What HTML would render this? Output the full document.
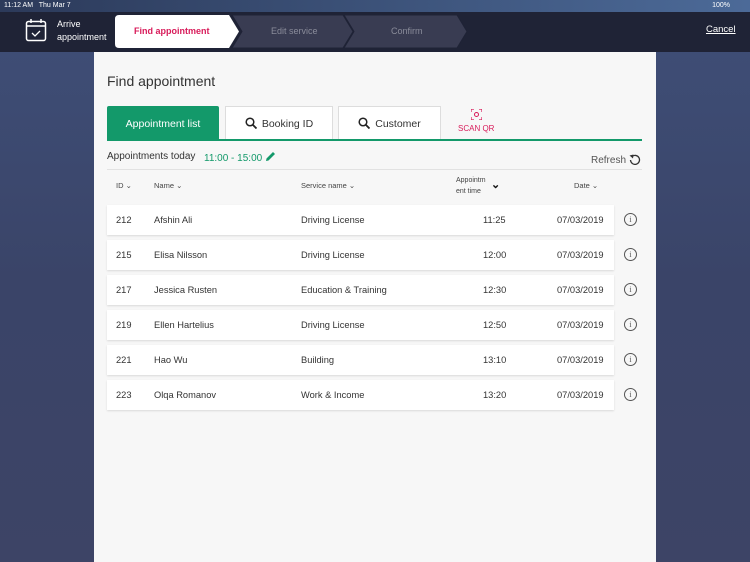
<!DOCTYPE html>
<html><head><style>
*{margin:0;padding:0;box-sizing:border-box}
body{width:750px;height:562px;overflow:hidden;font-family:"Liberation Sans",sans-serif;background:linear-gradient(180deg,#3f4f78 0%,#3a4468 50%,#3d4466 100%);position:relative}
.status{position:absolute;left:0;top:0;width:750px;height:12px;background:linear-gradient(90deg,#2c3a5a,#4c6a98);color:#fff;font-size:7px;line-height:12px;padding-left:4px}
.top{position:absolute;left:0;top:12px;width:750px;height:40px;background:#1f2336;color:#fff}
.panel{position:absolute;left:94px;top:52px;width:562px;height:510px;background:#f7f7f7}
.abs{position:absolute}
.row{position:absolute;left:13px;width:507px;height:30px;background:#fff;box-shadow:0 1px 2px rgba(0,0,0,.12);font-size:9.3px;color:#333}
.row span{position:absolute;top:10px}
.info{position:absolute;left:530px;width:13px;height:13px;border:1px solid #555;border-radius:50%;font-size:8px;text-align:center;line-height:11px;color:#555;font-family:"Liberation Serif",serif}
.hd{position:absolute;top:129px;font-size:7.5px;color:#444}
.tab{position:absolute;top:54px;height:34px;background:#fff;border:1px solid #ddd;border-bottom:none;font-size:10.5px;color:#333;line-height:34px;text-align:center}
.tab svg{vertical-align:-2px;margin-right:5px}
</style></head><body>
<div class="status">11:12 AM &nbsp; Thu Mar 7<span style="position:absolute;right:20px">100%</span></div>
<div class="top">
<svg class="abs" style="left:25px;top:6px" width="22" height="24" viewBox="0 0 22 24"><rect x="1.5" y="3.5" width="19" height="19" rx="2" fill="none" stroke="#fff" stroke-width="1.5"/><line x1="1.5" y1="8" x2="20.5" y2="8" stroke="#fff" stroke-width="1.5"/><line x1="6" y1="1" x2="6" y2="5" stroke="#fff" stroke-width="1.5"/><line x1="16" y1="1" x2="16" y2="5" stroke="#fff" stroke-width="1.5"/><path d="M7 15l3 3 5-5" fill="none" stroke="#fff" stroke-width="1.3"/></svg>
<div class="abs" style="left:57px;top:6px;font-size:9px;line-height:13px">Arrive<br>appointment</div>
<svg class="abs" style="left:115px;top:3px" width="360" height="33">
<path d="M229 0H342L352 16.5 342 33H229L239 16.5Z" fill="#393c52" stroke="#1f2336" stroke-width="1"/>
<path d="M117 0H228L238 16.5 228 33H117L127 16.5Z" fill="#393c52" stroke="#1f2336" stroke-width="1"/>
<path d="M4 0H114L124 16.5 114 33H4Q0 33 0 29V4Q0 0 4 0Z" fill="#fff"/>
</svg>
<div class="abs" style="left:134px;top:14px;font-size:9px;font-weight:bold;color:#d81b5a">Find appointment</div>
<div class="abs" style="left:271px;top:14px;font-size:9px;color:#8a8c9a">Edit service</div>
<div class="abs" style="left:391px;top:14px;font-size:9px;color:#8a8c9a">Confirm</div>
<div class="abs" style="left:706px;top:12px;font-size:9.5px;text-decoration:underline">Cancel</div>
</div>
<div class="panel">
<div class="abs" style="left:13px;top:21px;font-size:14px;color:#333">Find appointment</div>
<div class="tab" style="left:13px;width:112px;background:#13996a;border-color:#13996a;color:#fff;border-radius:2px 2px 0 0">Appointment list</div>
<div class="tab" style="left:131px;width:108px"><svg width="12" height="12"><circle cx="5" cy="5" r="3.8" fill="none" stroke="#222" stroke-width="1.5"/><line x1="7.8" y1="7.8" x2="11.5" y2="11.5" stroke="#222" stroke-width="1.8"/></svg>Booking ID</div>
<div class="tab" style="left:244px;width:103px"><svg width="12" height="12"><circle cx="5" cy="5" r="3.8" fill="none" stroke="#222" stroke-width="1.5"/><line x1="7.8" y1="7.8" x2="11.5" y2="11.5" stroke="#222" stroke-width="1.8"/></svg>Customer</div>
<svg class="abs" style="left:377px;top:57px" width="11" height="11"><path d="M0 3V0H3M8 0H11V3M11 8V11H8M3 11H0V8" fill="none" stroke="#d81b5a" stroke-width="1.2"/><circle cx="5.5" cy="5.5" r="2" fill="none" stroke="#d81b5a"/></svg>
<div class="abs" style="left:364px;top:72px;font-size:8px;color:#d81b5a">SCAN QR</div>
<div class="abs" style="left:13px;top:87px;width:535px;height:2px;background:#13996a"></div>
<div class="abs" style="left:13px;top:99px;font-size:10px;color:#333">Appointments today</div>
<div class="abs" style="left:110px;top:99px;font-size:10px;color:#13996a">11:00 - 15:00 <svg width="11" height="11" style="vertical-align:-1px"><path d="M1 10L1.5 7.5 8 1 10 3 3.5 9.5Z" fill="#13996a"/></svg></div>
<div class="abs" style="left:497px;top:101px;font-size:10px;color:#555">Refresh <svg width="12" height="12" style="vertical-align:-2px"><path d="M3 3.5A4.5 4.5 0 1 1 1.5 7" fill="none" stroke="#333" stroke-width="1.3"/><path d="M0.5 2.5L4.5 1.5 4 5.5Z" fill="#333"/></svg></div>
<div class="abs" style="left:13px;top:117px;width:535px;height:1px;background:#e2e2e2"></div>
<div class="hd" style="left:22px">ID ⌄</div>
<div class="hd" style="left:60px">Name ⌄</div>
<div class="hd" style="left:207px">Service name ⌄</div>
<div class="hd" style="left:362px;top:123px;line-height:11px;font-size:7px">Appointm<br>ent time</div>
<div class="hd" style="left:397px;top:126px;font-size:11px;color:#111;font-weight:bold">⌄</div>
<div class="hd" style="left:480px">Date ⌄</div>
<div class="row" style="top:153px"><span style="left:9px">212</span><span style="left:47px">Afshin Ali</span><span style="left:194px">Driving License</span><span style="left:376px">11:25</span><span style="left:450px">07/03/2019</span></div><div class="info" style="top:161px">i</div>
<div class="row" style="top:188px"><span style="left:9px">215</span><span style="left:47px">Elisa Nilsson</span><span style="left:194px">Driving License</span><span style="left:376px">12:00</span><span style="left:450px">07/03/2019</span></div><div class="info" style="top:196px">i</div>
<div class="row" style="top:223px"><span style="left:9px">217</span><span style="left:47px">Jessica Rusten</span><span style="left:194px">Education &amp; Training</span><span style="left:376px">12:30</span><span style="left:450px">07/03/2019</span></div><div class="info" style="top:231px">i</div>
<div class="row" style="top:258px"><span style="left:9px">219</span><span style="left:47px">Ellen Hartelius</span><span style="left:194px">Driving License</span><span style="left:376px">12:50</span><span style="left:450px">07/03/2019</span></div><div class="info" style="top:266px">i</div>
<div class="row" style="top:293px"><span style="left:9px">221</span><span style="left:47px">Hao Wu</span><span style="left:194px">Building</span><span style="left:376px">13:10</span><span style="left:450px">07/03/2019</span></div><div class="info" style="top:301px">i</div>
<div class="row" style="top:328px"><span style="left:9px">223</span><span style="left:47px">Olqa Romanov</span><span style="left:194px">Work &amp; Income</span><span style="left:376px">13:20</span><span style="left:450px">07/03/2019</span></div><div class="info" style="top:336px">i</div>
</div>
</body></html>
